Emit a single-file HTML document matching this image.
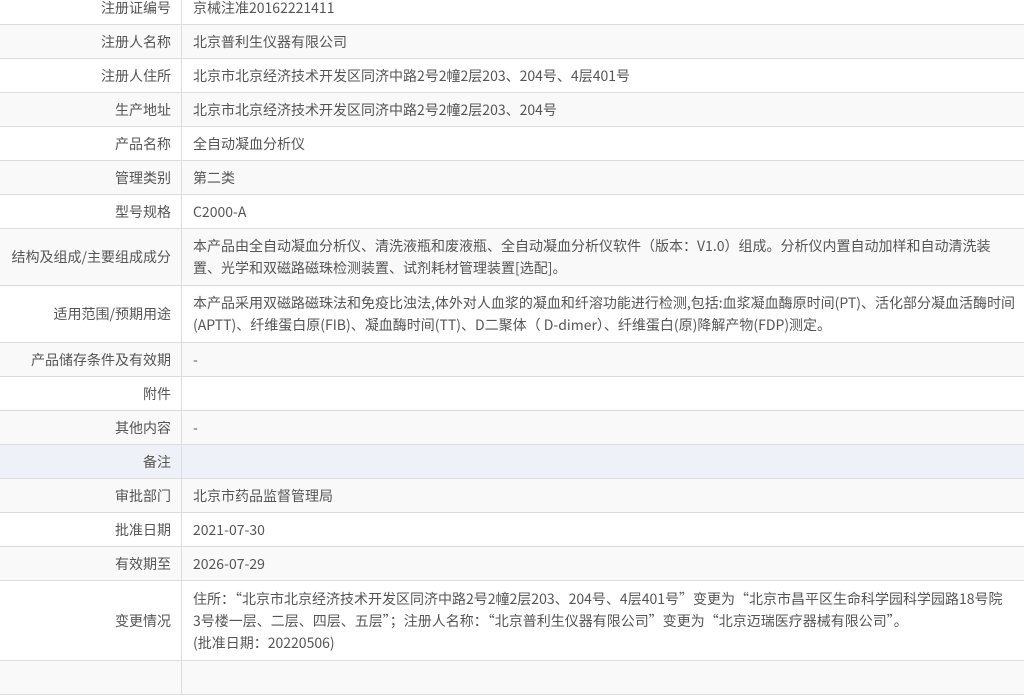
<!DOCTYPE html>
<html><head><meta charset="utf-8"><style>
body{margin:0;background:#fff;font-family:"Noto Sans CJK SC","Liberation Sans",sans-serif;font-size:14px;color:#555;width:1024px;height:669px;overflow:hidden;position:relative}
.r{position:absolute;left:0;width:1024px;border-bottom:1px solid #ddd;box-sizing:border-box}
.g{background:#f9f9f9}
.h{background:#eef1f7}
.l{position:absolute;left:0;top:0;bottom:0;width:182px;border-right:1px solid #ddd;display:flex;align-items:center;justify-content:flex-end;padding-right:10px;box-sizing:border-box;white-space:nowrap}
.c{position:absolute;left:193px;top:0;bottom:0;right:0;display:flex;align-items:center;line-height:22px;white-space:nowrap}
</style></head><body>
<div class="r" style="top:-9px;height:34px"><div class="l">注册证编号</div><div class="c">京械注准20162221411</div></div>
<div class="r g" style="top:25px;height:34px"><div class="l">注册人名称</div><div class="c">北京普利生仪器有限公司</div></div>
<div class="r" style="top:59px;height:34px"><div class="l">注册人住所</div><div class="c">北京市北京经济技术开发区同济中路2号2幢2层203、204号、4层401号</div></div>
<div class="r g" style="top:93px;height:34px"><div class="l">生产地址</div><div class="c">北京市北京经济技术开发区同济中路2号2幢2层203、204号</div></div>
<div class="r" style="top:127px;height:34px"><div class="l">产品名称</div><div class="c">全自动凝血分析仪</div></div>
<div class="r g" style="top:161px;height:34px"><div class="l">管理类别</div><div class="c">第二类</div></div>
<div class="r" style="top:195px;height:34px"><div class="l">型号规格</div><div class="c">C2000-A</div></div>
<div class="r g" style="top:229px;height:57px"><div class="l">结构及组成/主要组成成分</div><div class="c">本产品由全自动凝血分析仪、清洗液瓶和废液瓶、全自动凝血分析仪软件（版本：V1.0）组成。分析仪内置自动加样和自动清洗装<br>置、光学和双磁路磁珠检测装置、试剂耗材管理装置[选配]。</div></div>
<div class="r" style="top:286px;height:57px"><div class="l">适用范围/预期用途</div><div class="c">本产品采用双磁路磁珠法和免疫比浊法,体外对人血浆的凝血和纤溶功能进行检测,包括:血浆凝血酶原时间(PT)、活化部分凝血活酶时间<br>(APTT)、纤维蛋白原(FIB)、凝血酶时间(TT)、D二聚体（ D-dimer）、纤维蛋白(原)降解产物(FDP)测定。</div></div>
<div class="r g" style="top:343px;height:34px"><div class="l">产品储存条件及有效期</div><div class="c">-</div></div>
<div class="r" style="top:377px;height:34px"><div class="l">附件</div><div class="c"></div></div>
<div class="r g" style="top:411px;height:34px"><div class="l">其他内容</div><div class="c">-</div></div>
<div class="r h" style="top:445px;height:34px"><div class="l">备注</div><div class="c"></div></div>
<div class="r g" style="top:479px;height:34px"><div class="l">审批部门</div><div class="c">北京市药品监督管理局</div></div>
<div class="r" style="top:513px;height:34px"><div class="l">批准日期</div><div class="c">2021-07-30</div></div>
<div class="r g" style="top:547px;height:34px"><div class="l">有效期至</div><div class="c">2026-07-29</div></div>
<div class="r" style="top:581px;height:80px"><div class="l">变更情况</div><div class="c">住所：“北京市北京经济技术开发区同济中路2号2幢2层203、204号、4层401号”变更为“北京市昌平区生命科学园科学园路18号院<br>3号楼一层、二层、四层、五层”；注册人名称：“北京普利生仪器有限公司”变更为“北京迈瑞医疗器械有限公司”。<br>(批准日期：20220506)</div></div>
<div class="r g" style="top:661px;height:34px"><div class="l"></div></div>
</body></html>
